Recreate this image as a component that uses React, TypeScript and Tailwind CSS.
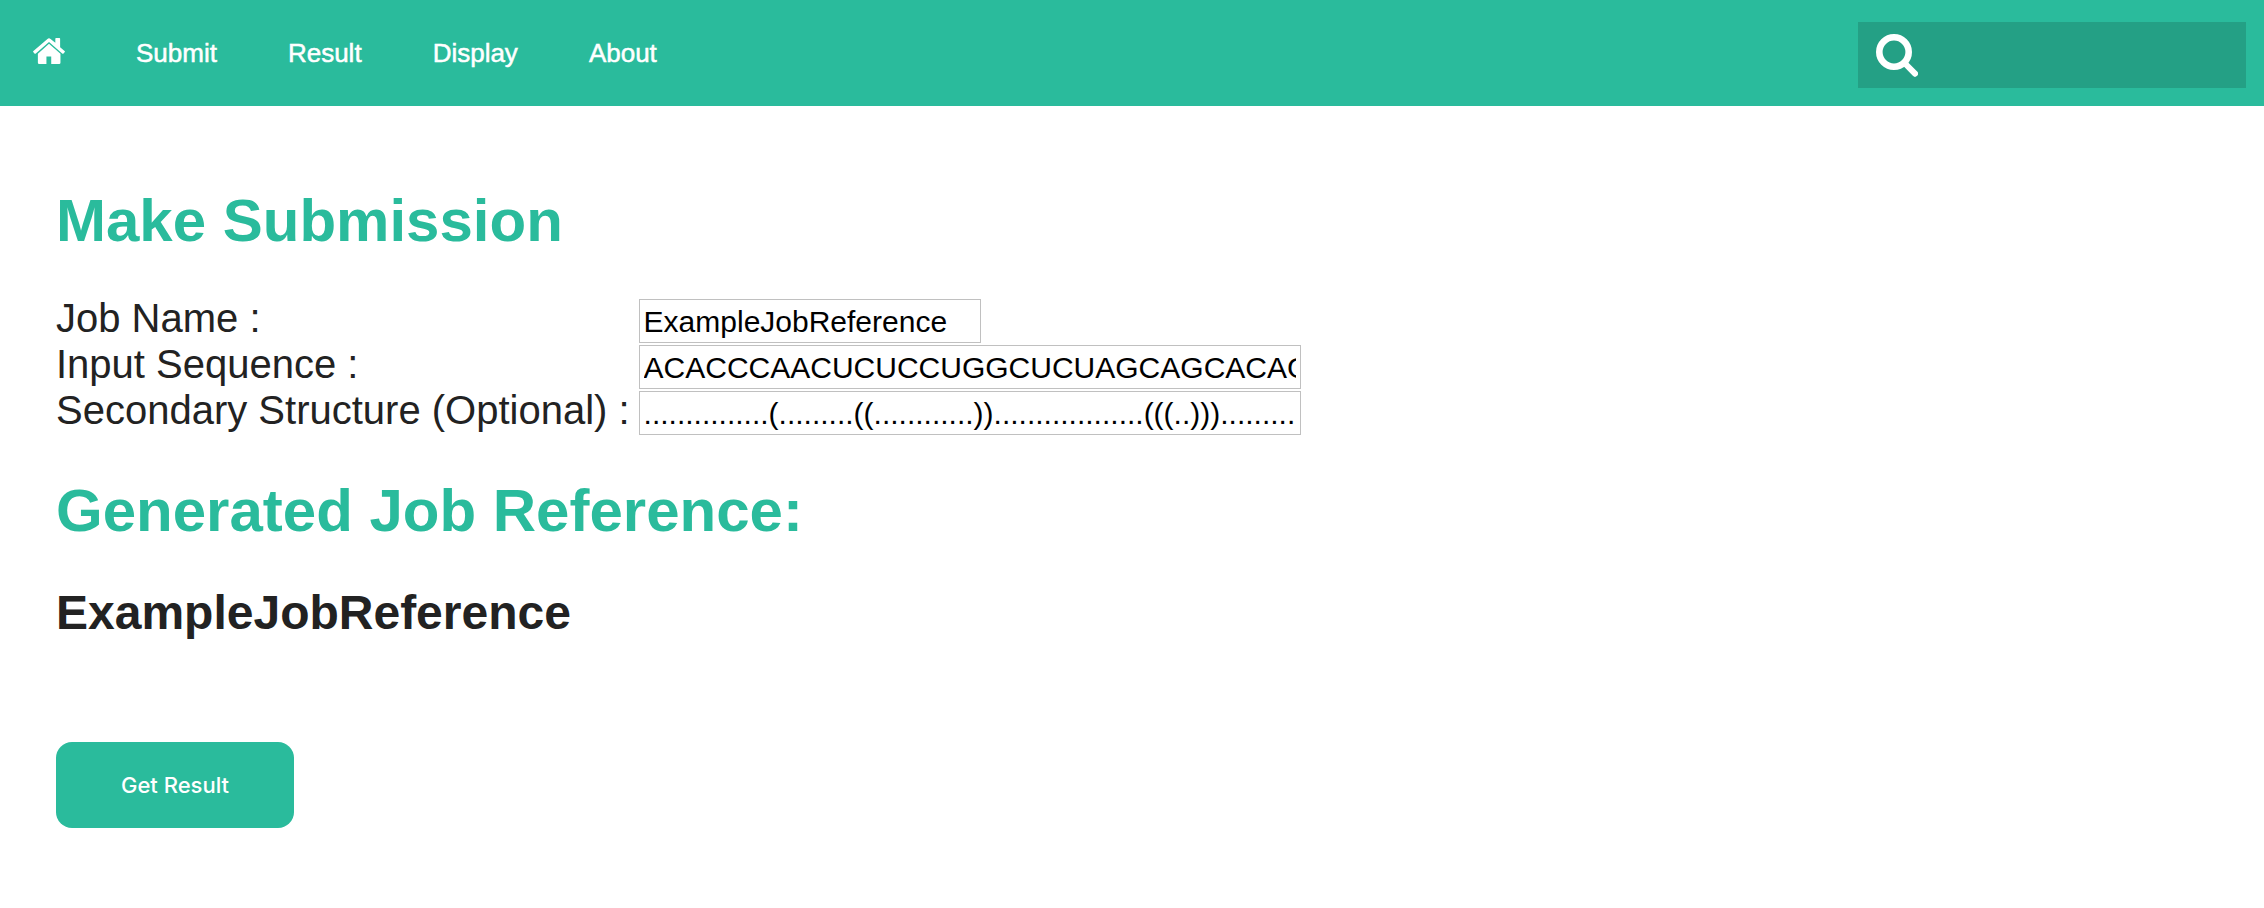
import React from "react";

const links = ["Submit", "Result", "Display", "About"];

function HomeIcon() {
  return (
    <svg viewBox="0 0 93 76" className="h-[26px] w-8" fill="currentColor" aria-hidden="true">
      <path d="M65 14V2q0-2 2-2h10q2 0 2 2v25l13 11q2 2 0 4l-3 3q-2 2-4 0L46.500 12 8 45q-2 2-4 0l-3-3q-2-2 0-4L42 3q4.500-4 9 0z" />
      <path d="M46.500 17 80 46v26q0 4-4 4H53V54H39v22H18q-4 0-4-4V46z" />
    </svg>
  );
}

function SearchIcon() {
  return (
    <svg viewBox="0 0 42 43" className="h-[43px] w-[42px] shrink-0" fill="none" stroke="currentColor" aria-hidden="true">
      <circle cx="18" cy="18" r="14.700" strokeWidth="6.600" />
      <path d="M29 29.500 39 39.700" strokeWidth="6" strokeLinecap="round" />
    </svg>
  );
}

const inputClass =
  "h-11 border border-[#c0c0c0] bg-white px-1 text-[30px] text-black outline-none";
const labelClass = "text-[40px] leading-[38px] whitespace-nowrap";

export default function App() {
  return (
    <div className="font-['Liberation_Sans',Arial,sans-serif] text-[#222222]">
      <header className="flex h-[106px] items-center justify-between bg-[#2abb9c] pr-[18px] pl-[33px] text-white">
        <nav className="flex items-center gap-[71px]">
          <a href="#home" aria-label="Home" className="pb-1">
            <HomeIcon />
          </a>
          {links.map((name) => (
            <a key={name} href={"#" + name.toLowerCase()} className="text-[26px] [-webkit-text-stroke:0.5px_white]">
              {name}
            </a>
          ))}
        </nav>
        <label className="mt-1 flex h-[66px] w-[388px] items-center bg-[#24a085] px-[18px]">
          <SearchIcon />
          <input type="text" aria-label="Search" className="ml-3 min-w-0 flex-1 bg-transparent text-[26px] outline-none" />
        </label>
      </header>

      <main className="px-14 pt-[85px]">
        <h1 className="text-[60px] leading-none font-bold text-[#2abb9c]">Make Submission</h1>

        <form id="job" className="mt-12 grid grid-cols-[max-content_auto] items-start justify-start gap-x-[9px] gap-y-0.5">
          <label htmlFor="job-name" className={labelClass}>Job Name :</label>
          <input id="job-name" type="text" defaultValue="ExampleJobReference" className={inputClass + " w-[342px]"} />
          <label htmlFor="sequence" className={labelClass}>Input Sequence :</label>
          <input id="sequence" type="text" defaultValue="ACACCCAACUCUCCUGGCUCUAGCAGCACAG" className={inputClass + " w-[662px]"} />
          <label htmlFor="structure" className={labelClass}>Secondary Structure (Optional) :</label>
          <input id="structure" type="text" defaultValue="...............(.........((............))..................(((..)))........." className={inputClass + " w-[662px]"} />
        </form>

        <h1 className="mt-[46px] text-[60px] leading-none font-bold text-[#2abb9c]">Generated Job Reference:</h1>
        <h2 className="mt-12 text-[48px] leading-none font-bold">ExampleJobReference</h2>

        <button type="submit" form="job" className="mt-[105px] h-[86px] w-[238px] rounded-2xl bg-[#2abb9c] font-['Inter',sans-serif] text-[22px] font-medium text-white">
          Get Result
        </button>
      </main>
    </div>
  );
}
